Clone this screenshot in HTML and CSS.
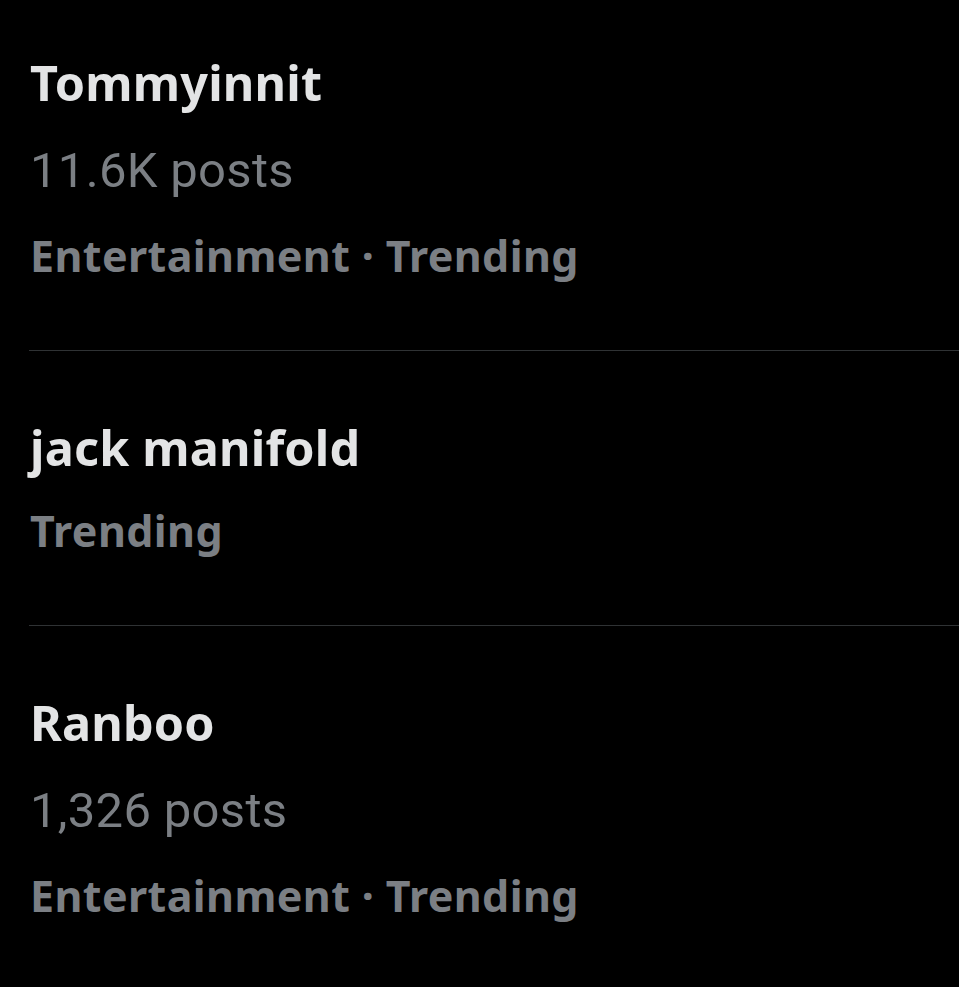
FILE: index.html
```html
<!DOCTYPE html>
<html lang="en">
<head>
<meta charset="utf-8">
<title>Trending</title>
<link rel="stylesheet" href="styles.css">
</head>
<body>
<main class="list">
  <section class="row">
    <div class="title">Tommyinnit</div>
    <div class="posts">11.6K posts</div>
    <div class="meta">Entertainment · Trending</div>
  </section>
  <section class="row">
    <div class="title">jack manifold</div>
    <div class="meta">Trending</div>
  </section>
  <section class="row">
    <div class="title">Ranboo</div>
    <div class="posts">1,326 posts</div>
    <div class="meta">Entertainment · Trending</div>
  </section>
</main>
</body>
</html>
```
FILE: styles.css
```css
html, body {
  margin: 0;
  padding: 0;
  background: #000;
}
body {
  width: 959px;
  height: 987px;
  overflow: hidden;
}
.list {
  display: flex;
  flex-direction: column;
  padding-left: 29px;
}
.row {
  display: flex;
  flex-direction: column;
  gap: 28px;
  padding: 66px 0 68px 1px;
  border-bottom: 1px solid #2f3234;
}
.row:first-child {
  padding-top: 52px;
}
.row:last-child {
  border-bottom: none;
}
.title {
  font-family: "Noto Sans", "Liberation Sans", sans-serif;
  font-weight: 700;
  font-size: 48.5px;
  line-height: 60px;
  letter-spacing: 0.2px;
  color: #e3e4e5;
}
.posts {
  font-family: Roboto, "Liberation Sans", sans-serif;
  font-weight: 400;
  font-size: 49px;
  line-height: 62px;
  letter-spacing: 0.3px;
  color: #7b7f84;
}
.meta {
  font-family: "Noto Sans", "Liberation Sans", sans-serif;
  font-weight: 700;
  font-size: 43px;
  line-height: 52px;
  letter-spacing: 0.4px;
  color: #7b7f84;
}
```
